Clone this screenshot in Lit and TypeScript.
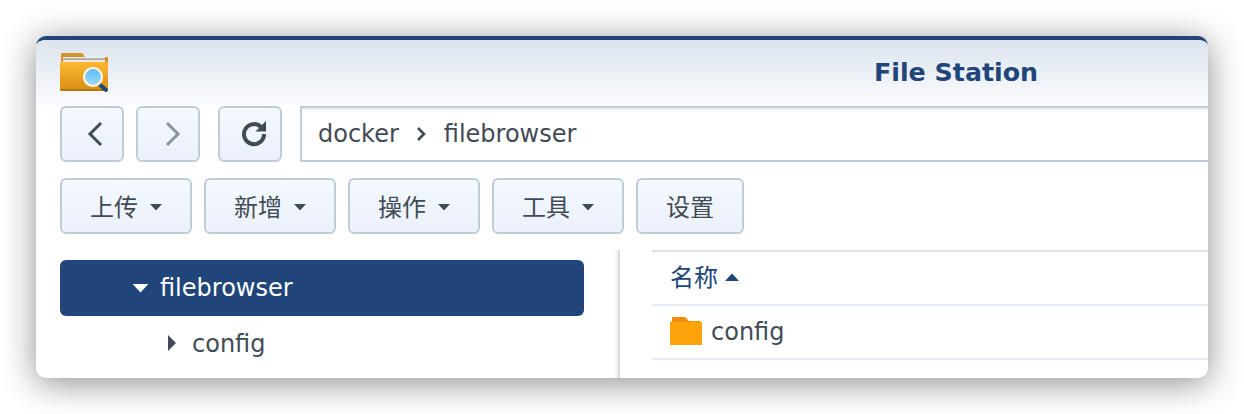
import { LitElement, html, css, svg } from 'lit';
import { customElement } from 'lit/decorators.js';

const caret = html`<svg class="caret" width="12" height="7" viewBox="0 0 14 8"><path d="M0 0h14L7 7.5z" fill="currentColor"/></svg>`;

const appIcon = svg`
  <svg width="50" height="42" viewBox="0 0 50 42">
    <defs>
      <linearGradient id="fold" x1="0" y1="0" x2="0" y2="1">
        <stop offset="0" stop-color="#ffb833"/>
        <stop offset="1" stop-color="#d98f14"/>
      </linearGradient>
      <linearGradient id="lens" x1="0" y1="0" x2="0" y2="1">
        <stop offset="0" stop-color="#55bdf7"/>
        <stop offset="1" stop-color="#a4dcfb"/>
      </linearGradient>
    </defs>
    <path d="M1 2q0-1 1-1h19q1 0 2 1l2 3h22q1 0 1 1v10H1z" fill="#d8922a"/>
    <rect x="3" y="5" width="42" height="1.5" fill="#efefef"/>
    <rect x="3" y="6.5" width="42" height="1.5" fill="#a9a9a9"/>
    <rect x="3" y="8" width="42" height="2" fill="#e8e8e8"/>
    <path d="M0 11q0-1 1-1h46q1 0 1 1v26q0 1-1 1H1q-1 0-1-1z" fill="url(#fold)"/>
    <path d="M0 37h48q0 2-1 2H1q-1 0-1-2z" fill="#b5760f"/>
    <path d="M39 32l7 6" stroke="#1d4a78" stroke-width="4" stroke-linecap="round"/>
    <circle cx="33" cy="25" r="9" fill="url(#lens)" stroke="#fff6e0" stroke-width="2.2"/>
  </svg>`;

@customElement('app-root')
export class AppRoot extends LitElement {
  static styles = css`
    :host {
      display: block;
      padding: 36px;
      background: #fff;
      font-family: 'DejaVu Sans', 'Noto Sans CJK SC', sans-serif;
      color: #414b55;
    }
    .window {
      height: 342px;
      box-sizing: border-box;
      border-top: 4px solid #20457a;
      border-radius: 10px;
      background: #fff;
      overflow: hidden;
      box-shadow: 0 5px 34px rgba(0, 0, 0, 0.45);
      position: relative;
    }
    .titlebar {
      height: 66px;
      background: linear-gradient(#dce4ee, #fbfcfe);
      padding-left: 24px;
      position: relative;
    }
    .app-icon {
      padding-top: 12px;
    }
    .title {
      position: absolute;
      left: 838px;
      top: 16px;
      font-size: 25.3px;
      line-height: 34px;
      font-weight: 700;
      color: #20457a;
      white-space: nowrap;
    }
    .nav {
      display: flex;
      padding-left: 24px;
      height: 56px;
    }
    .btn {
      box-sizing: border-box;
      border: 2px solid #c0ccda;
      border-radius: 6px;
      background: linear-gradient(#f4f8ff, #ebf1fa);
      display: flex;
      align-items: center;
      justify-content: center;
      height: 56px;
      font-size: 24px;
    }
    .square {
      width: 64px;
      margin-right: 12px;
    }
    .square.refresh {
      margin-left: 6px;
      margin-right: 18px;
    }
    .back svg { margin-left: 5px; }
    .forward svg { margin-left: 9px; }
    .refresh svg { margin-left: 8px; }
    .address {
      flex: 1;
      box-sizing: border-box;
      border: 2px solid #c0ccda;
      border-right: 0;
      box-shadow: inset 0 2px 0 #eeeeee;
      display: flex;
      align-items: center;
      padding-left: 16px;
      font-size: 24px;
    }
    .address svg {
      margin: 0 18px 0 17px;
    }
    .actions {
      display: flex;
      gap: 12px;
      padding: 16px 0 0 24px;
    }
    .action {
      width: 132px;
      gap: 12px;
      padding-bottom: 2px;
    }
    .action.plain {
      width: 108px;
    }
    .caret {
      color: #414b55;
      margin-top: 4px;
    }
    .panes {
      display: grid;
      grid-template-columns: 584px 588px;
      margin-top: 16px;
      height: 128px;
    }
    .tree {
      box-sizing: border-box;
      padding: 10px 0 0 24px;
      border-right: 2px solid #dcdcdc;
      box-shadow: inset -6px 0 5px -4px rgba(0, 0, 0, 0.08);
      font-size: 24px;
    }
    .node {
      display: flex;
      align-items: center;
      height: 56px;
      width: 524px;
      box-sizing: border-box;
    }
    .node.selected {
      background: #20457a;
      color: #fff;
      border-radius: 6px;
      padding-left: 72px;
      gap: 11px;
    }
    .node.selected .caret {
      color: #fff;
      width: 17px;
      height: 9px;
      margin-top: 0;
    }
    .node.child {
      padding-left: 108px;
      gap: 16px;
    }
    .node.child svg {
      margin-top: -2px;
    }
    .list {
      padding-left: 32px;
    }
    .head {
      box-sizing: border-box;
      height: 56px;
      border-top: 2px solid #d9e1eb;
      border-bottom: 2px solid #e6ebf1;
      display: flex;
      align-items: center;
      gap: 7px;
      padding-left: 18px;
      color: #20457a;
      font-size: 24px;
      padding-bottom: 6px;
    }
    .head svg {
      margin-top: 4px;
    }
    .row {
      box-sizing: border-box;
      height: 54px;
      border-bottom: 2px solid #e6ebf1;
      display: flex;
      align-items: center;
      gap: 9px;
      padding-left: 18px;
      font-size: 24px;
    }
    .row svg {
      margin-top: -2px;
    }
  `;

  render() {
    return html`
      <div class="window">
        <div class="titlebar">
          <div class="app-icon">${appIcon}</div>
          <div class="title">File Station</div>
        </div>
        <div class="nav">
          <div class="btn square back">
            <svg width="18" height="26" viewBox="0 0 18 26"><path d="M15 2L4 13l11 11" fill="none" stroke="#414b55" stroke-width="3"/></svg>
          </div>
          <div class="btn square forward">
            <svg width="18" height="26" viewBox="0 0 18 26"><path d="M3 2l11 11L3 24" fill="none" stroke="#8a949e" stroke-width="3"/></svg>
          </div>
          <div class="btn square refresh">
            <svg width="26" height="26" viewBox="0 0 26 26"><path d="M20.5 6.5A10 10 0 1 0 23 13" fill="none" stroke="#414b55" stroke-width="4"/><path d="M14.5 10.5L25 0v10.5z" fill="#414b55"/></svg>
          </div>
          <div class="address">
            docker
            <svg width="10" height="14" viewBox="0 0 10 14"><path d="M2 1l6 6-6 6" fill="none" stroke="#414b55" stroke-width="2.6"/></svg>
            filebrowser
          </div>
        </div>
        <div class="actions">
          <div class="btn action">上传 ${caret}</div>
          <div class="btn action">新增 ${caret}</div>
          <div class="btn action">操作 ${caret}</div>
          <div class="btn action">工具 ${caret}</div>
          <div class="btn action plain">设置</div>
        </div>
        <div class="panes">
          <div class="tree">
            <div class="node selected">${caret}filebrowser</div>
            <div class="node child">
              <svg width="8" height="16" viewBox="0 0 8 16"><path d="M0 0l8 8-8 8z" fill="#414b55"/></svg>
              config
            </div>
          </div>
          <div class="list">
            <div class="head">
              名称
              <svg width="14" height="8" viewBox="0 0 14 8"><path d="M0 8h14L7 .5z" fill="#20457a"/></svg>
            </div>
            <div class="row">
              <svg width="32" height="28" viewBox="0 0 32 28">
                <path d="M2 0h12q1 0 2 1l3 3h11v3H2z" fill="#f28c0c"/>
                <rect y="5" width="32" height="23" fill="#ffa30a"/>
              </svg>
              config
            </div>
          </div>
        </div>
      </div>
    `;
  }
}
